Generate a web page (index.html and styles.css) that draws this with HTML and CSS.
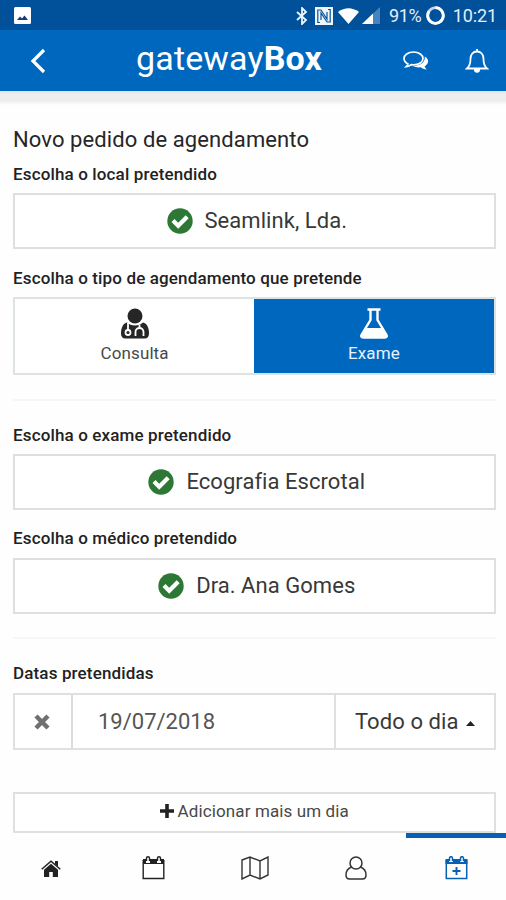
FILE: index.html
```html
<!DOCTYPE html>
<html lang="pt">
<head>
<meta charset="utf-8">
<meta name="viewport" content="width=device-width">
<title>gatewayBox</title>
<link rel="stylesheet" href="styles.css">
</head>
<body>
<div class="status">
  <svg class="photo" width="17" height="17" viewBox="0 0 17 17"><rect width="17" height="17" rx="1.5" fill="#fff"/><path d="M3 13l3-3.500 2 2 2.500-3L14 13z" fill="#163d79"/></svg>
  <svg class="bluetooth" width="12" height="18" viewBox="0 0 12 18"><path d="M1 5l9 8-4 4V1l4 4-9 8" fill="none" stroke="#eef5fb" stroke-width="1.800"/></svg>
  <svg class="nfc" width="18" height="18" viewBox="0 0 18 18"><rect width="18" height="18" fill="#eef5fb"/><path d="M5 15.500H2.800V3H6l6 9V5M13 2.500h2.200V15H12L6 6v7" fill="none" stroke="#07529c" stroke-width="1.200"/></svg>
  <svg class="wifi" width="21" height="16" viewBox="0 0 21 16"><path d="M0 4Q10.500-3.500 21 4L10.500 16z" fill="#fff"/></svg>
  <svg class="signal" width="18" height="17" viewBox="0 0 18 17"><path d="M0 17L18 0v17z" fill="#4584bc"/><path d="M0 17L11 6.500V17z" fill="#fff"/></svg>
  <span class="percent">91%</span>
  <svg class="battery" width="19" height="19" viewBox="0 0 19 19"><circle cx="9.500" cy="9.500" r="7.800" fill="none" stroke="#c4d8eb" stroke-width="2.800"/><path d="M9.500 1.700a7.800 7.800 0 1 1-6.500 3.500" fill="none" stroke="#fff" stroke-width="2.800"/></svg>
  <span class="clock">10:21</span>
</div>
<header class="header">
  <svg class="back" width="16" height="26" viewBox="0 0 16 26"><path d="M14 2L3 13l11 11" fill="none" stroke="#fff" stroke-width="3.200"/></svg>
  <h1 class="brand">gateway<b>Box</b></h1>
  <svg class="chat" width="26" height="21" viewBox="0 0 26 21"><path d="M10.500 1C5 1 1 4 1 7.500c0 2.300 1.600 4.200 4 5.400-.3 1.200-1 2-1.800 2.800 2.200-.2 3.800-.9 5-2l2.300.1c5.500 0 9.500-2.800 9.500-6.300S16 1 10.500 1z" fill="none" stroke="#fff" stroke-width="1.700"/><path d="M21.800 5.500c2.200 1.300 3.300 3 3.300 4.800 0 2-1.300 3.800-3.400 5 .3 1.300 1.100 2.200 2.200 3.200-2.700 0-4.600-.9-6-2.200-3.200.4-5.900-.2-7.900-1.300 6.500.1 12.500-3.400 11.800-9.500z" fill="#fff"/></svg>
  <svg class="bell" width="24" height="26" viewBox="0 0 24 26"><path d="M2 20.500c3-2.500 3.500-5 3.500-9.500 0-4.500 2.500-7.500 6.500-7.500s6.500 3 6.500 7.500c0 4.500.5 7 3.500 9.500zM12 3.500V1" fill="none" stroke="#fff" stroke-width="1.800"/><path d="M8.800 21h6.400a3.200 3.700 0 0 1-6.400 0z" fill="#fff"/></svg>
</header>
<main class="content">
  <h2 class="title">Novo pedido de agendamento</h2>
  <p class="label label-place">Escolha o local pretendido</p>
  <div class="choice">
    <svg class="check" width="26" height="26" viewBox="0 0 26 26"><circle cx="13" cy="13" r="12.700" fill="#2d7834"/><path d="M6 12.500l5.200 5.200 9-9" fill="none" stroke="#fff" stroke-width="4.200"/></svg>
    <span>Seamlink, Lda.</span>
  </div>
  <p class="label label-type">Escolha o tipo de agendamento que pretende</p>
  <div class="types">
    <div class="type">
      <svg width="28" height="31" viewBox="0 0 28 31"><circle cx="14" cy="8" r="7.500" fill="#262626"/><path d="M6 14.500c4 4 12 4 16 0 4 1 6 5 6 11 0 3-1.500 5-4.500 5h-19C1.500 30.500 0 28.500 0 25.500c0-6 2-10 6-11z" fill="#262626"/><path d="M7 15v7M18.500 16.500v3.500M14.500 28v-4a4 4 0 0 1 8 0v4" fill="none" stroke="#fff" stroke-width="1.800"/><circle cx="7" cy="24.500" r="2.500" fill="#262626" stroke="#fff" stroke-width="1.800"/></svg>
      <span>Consulta</span>
    </div>
    <div class="type type-active">
      <svg width="28" height="31" viewBox="0 0 28 31"><path d="M7.500 1.500h13M10.500 2v10L1.700 26.500c-1 1.800-.3 3 1.500 3h21.600c1.800 0 2.500-1.200 1.500-3L17.500 12V2" fill="none" stroke="#fff" stroke-width="2.400"/><path d="M6.500 20h15l5.500 8-1.500 2h-23L1 28z" fill="#fff"/></svg>
      <span>Exame</span>
    </div>
  </div>
  <hr class="rule">
  <p class="label label-exam">Escolha o exame pretendido</p>
  <div class="choice">
    <svg class="check" width="26" height="26" viewBox="0 0 26 26"><circle cx="13" cy="13" r="12.700" fill="#2d7834"/><path d="M6 12.500l5.200 5.200 9-9" fill="none" stroke="#fff" stroke-width="4.200"/></svg>
    <span>Ecografia Escrotal</span>
  </div>
  <p class="label label-doctor">Escolha o médico pretendido</p>
  <div class="choice">
    <svg class="check" width="26" height="26" viewBox="0 0 26 26"><circle cx="13" cy="13" r="12.700" fill="#2d7834"/><path d="M6 12.500l5.200 5.200 9-9" fill="none" stroke="#fff" stroke-width="4.200"/></svg>
    <span>Dra. Ana Gomes</span>
  </div>
  <hr class="rule rule-dates">
  <p class="label label-dates">Datas pretendidas</p>
  <div class="date-row">
    <div class="remove"><svg width="16" height="16" viewBox="0 0 16 16"><path d="M2 2l12 12M14 2L2 14" stroke="#707070" stroke-width="4.500"/></svg></div>
    <div class="date">19/07/2018</div>
    <div class="period"><span>Todo o dia</span><svg width="9" height="5" viewBox="0 0 9 5"><path d="M0 5l4.500-5L9 5z" fill="#222"/></svg></div>
  </div>
  <div class="add"><svg width="14" height="14" viewBox="0 0 14 14"><path d="M7 0v14M0 7h14" stroke="#222" stroke-width="3.600"/></svg><span>Adicionar mais um dia</span></div>
</main>
<nav class="tabs">
  <div class="tab"><svg width="20" height="17" viewBox="0 0 20 17"><path d="M10 3.800l7 6V17h-5.200v-5H8.200v5H3V9.800zM14 1h3v5.500l-3-2.600z" fill="#222"/><path d="M.7 9.300L10 1.300l9.300 8" fill="none" stroke="#222" stroke-width="1.500"/></svg></div>
  <div class="tab"><svg width="23" height="24" viewBox="0 0 23 24"><path d="M1 3h3v4h4V3h7v4h4V3h3v5H1z" fill="#222"/><path d="M1.200 4v18.500h20.600V4M4.500 5V2q0-1.300 1.500-1.300T7.500 2v3M15.500 5V2q0-1.300 1.500-1.300T18.500 2v3" fill="none" stroke="#222" stroke-width="1.400"/></svg></div>
  <div class="tab"><svg width="28" height="24" viewBox="0 0 28 24"><path d="M1 4l8-3 10 4 8-4v18l-8 4-10-4-8 4zM9 1v18M19 5v18" fill="none" stroke="#333" stroke-width="1.400"/></svg></div>
  <div class="tab"><svg width="22" height="24" viewBox="0 0 22 24"><circle cx="11" cy="7" r="6" fill="none" stroke="#333" stroke-width="1.500"/><path d="M6.500 11C2.500 12.500 1 15.500 1 19c0 2.500 1.500 4 3.500 4h13c2 0 3.500-1.500 3.500-4 0-3.500-1.500-6.500-5.500-8" fill="none" stroke="#333" stroke-width="1.500"/></svg></div>
  <div class="tab tab-active"><svg width="23" height="24" viewBox="0 0 23 24"><path d="M.5 3h3.700v3h3.600V3h7.400v3h3.600V3h3.700v5H.5z" fill="#0760b4"/><path d="M1.300 4v18.500h20.400V4M4.500 5V2q0-1.300 1.500-1.300T7.500 2v3M15.500 5V2q0-1.300 1.500-1.300T18.500 2v3" fill="none" stroke="#0760b4" stroke-width="1.500"/><path d="M11.500 11v8M7.500 15h8" stroke="#0760b4" stroke-width="1.900"/></svg></div>
</nav>
</body>
</html>
```
FILE: styles.css
```css
* { box-sizing: border-box; }
body { margin: 0; height: 900px; overflow: hidden; display: flex; flex-direction: column; background: #fefefe; color: #222; font-family: Roboto, "Liberation Sans", sans-serif; }
h1, h2, p { margin: 0; white-space: nowrap; }
svg { display: block; flex: none; }
span { white-space: nowrap; }
.status { height: 30px; flex: none; display: flex; align-items: center; padding: 1px 9px 0 14px; background: #00509a; color: #e5eef7; font-size: 18px; }
.bluetooth { margin-left: 265px; }
.nfc { margin-left: 7px; }
.wifi { margin-left: 5px; }
.signal { margin-left: 3px; }
.percent { width: 32px; margin-left: 9px; letter-spacing: -.4px; }
.battery { margin-left: 5px; }
.clock { margin-left: auto; letter-spacing: -.1px; }
.header { height: 61px; flex: none; display: flex; align-items: center; padding: 1px 17px 0 30px; background: #0067bf; color: #fff; }
.brand { width: 188px; margin: -7px 0 0 90px; font-size: 34px; font-weight: 400; line-height: 40px; letter-spacing: .15px; }
.chat { margin-left: 79px; }
.bell { margin-left: auto; }
.content { height: 742px; flex: none; padding: 35px 10.500px 0 13px; background: linear-gradient(#dfe3e6 0, #eee 3px, #eee 10px, #fefefe 14px); }
.title { height: 29px; color: #262626; font-size: 22px; font-weight: 400; line-height: 28px; letter-spacing: .1px; }
.label { color: #222; font-size: 17px; font-weight: 500; line-height: 20px; letter-spacing: .14px; }
.label-place { height: 38px; padding-top: 9px; }
.label-type { height: 48px; padding-top: 19px; }
.label-exam { height: 53px; padding-top: 24px; }
.label-doctor { height: 48px; padding-top: 18px; }
.label-dates { height: 54px; padding-top: 24px; }
.choice { height: 56px; display: flex; align-items: center; justify-content: center; gap: 12px; border: 2px solid #dfdfdf; color: #383838; font-size: 22px; background: #fff; padding-left: 5px; }
.choice span { letter-spacing: .05px; margin-top: -2px; }
.types { display: grid; grid-template-columns: 1fr 1fr; height: 78px; border: 2px solid #dde2e3; background: #fff; }
.type { display: flex; flex-direction: column; align-items: center; padding-top: 9px; gap: 3px; color: #484848; font-size: 17px; line-height: 22px; letter-spacing: .1px; }
.type-active { background: #0067bf; color: #e8f3fc; }
.rule { height: 2px; margin: 24px 0 0; border: 0; background: #f6f6f6; }
.rule-dates { margin-top: 23px; }
.date-row { height: 57px; display: grid; grid-template-columns: 58px 263px 1fr; border: 2px solid #e0e0e0; color: #444; font-size: 22px; background: #fff; }
.remove { display: flex; align-items: center; justify-content: center; border-right: 2px solid #dcdcdc; }
.remove svg { margin-left: -2px; }
.date { padding-left: 25px; line-height: 53px; color: #555; border-right: 2px solid #e0e0e0; }
.period { display: flex; align-items: center; justify-content: center; gap: 7px; color: #383838; padding-bottom: 1px; }
.period span { letter-spacing: .1px; }
.period svg { margin-top: 4px; }
.add { height: 41px; margin-top: 42px; padding-bottom: 3px; display: flex; align-items: center; justify-content: center; gap: 4px; border: 2px solid #e0e0e0; color: #484848; font-size: 17px; letter-spacing: .12px; background: #fff; }
.tabs { height: 67px; flex: none; display: grid; grid-template-columns: 102px 102px 101px 101px 100px; background: #fefefe; }
.tab { display: flex; align-items: center; justify-content: center; padding-top: 3px; }
.tab-active { border-top: 5px solid #0760b4; padding: 0 0 2px; }
```
